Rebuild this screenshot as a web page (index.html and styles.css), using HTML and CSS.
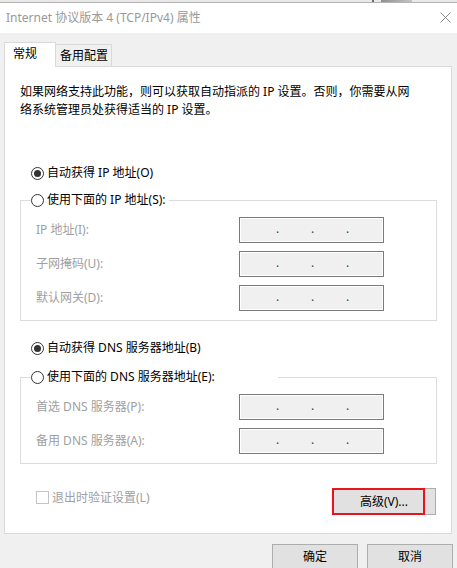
FILE: index.html
```html
<!DOCTYPE html>
<html lang="zh-CN">
<head>
<meta charset="utf-8">
<title>Internet 协议版本 4 (TCP/IPv4) 属性</title>
<link rel="stylesheet" href="styles.css">
</head>
<body>
<div class="topstrip"><span class="ts-tick"></span><span class="ts-block"></span></div>
<div class="titlebar">
  <span class="title">Internet 协议版本 4 (TCP/IPv4) 属性</span>
  <svg class="close" width="11" height="11" viewBox="0 0 11 11"><path d="M0.5 0.5 L10.5 10.5 M10.5 0.5 L0.5 10.5" stroke="#8c8c8c" stroke-width="1" fill="none"/></svg>
</div>
<div class="dialog">
  <div class="tabs">
    <div class="tab active">常规</div>
    <div class="tab">备用配置</div>
  </div>
  <div class="panel">
    <p class="desc">如果网络支持此功能，则可以获取自动指派的 IP 设置。否则，你需要从网<br>络系统管理员处获得适当的 IP 设置。</p>

    <div class="radio-row r-ip"><span class="radio checked"></span>自动获得 IP 地址(O)</div>
    <fieldset class="group g-ip">
      <legend class="radio-row"><span class="radio"></span>使用下面的 IP 地址(S):</legend>
      <div class="fields">
        <span class="flabel">IP 地址(I):</span>
        <span class="ipbox"><span>.</span><span>.</span><span>.</span></span>
        <span class="flabel">子网掩码(U):</span>
        <span class="ipbox"><span>.</span><span>.</span><span>.</span></span>
        <span class="flabel">默认网关(D):</span>
        <span class="ipbox"><span>.</span><span>.</span><span>.</span></span>
      </div>
    </fieldset>

    <div class="radio-row r-dns"><span class="radio checked"></span>自动获得 DNS 服务器地址(B)</div>
    <fieldset class="group g-dns">
      <legend class="radio-row wide"><span class="radio"></span>使用下面的 DNS 服务器地址(E):</legend>
      <div class="fields">
        <span class="flabel">首选 DNS 服务器(P):</span>
        <span class="ipbox"><span>.</span><span>.</span><span>.</span></span>
        <span class="flabel">备用 DNS 服务器(A):</span>
        <span class="ipbox"><span>.</span><span>.</span><span>.</span></span>
      </div>
    </fieldset>

    <div class="bottom-row">
      <div class="check-row"><span class="checkbox"></span>退出时验证设置(L)</div>
      <button class="btn adv">高级(V)...<span class="highlight"></span></button>
    </div>
  </div>
  <div class="dialog-buttons">
    <button class="btn ok">确定</button>
    <button class="btn cancel">取消</button>
  </div>
</div>
</body>
</html>
```
FILE: styles.css
```css
* { box-sizing: border-box; }
html, body { margin: 0; padding: 0; }
body {
  width: 457px;
  height: 568px;
  overflow: hidden;
  background: #f0f0f0;
  font-family: "Noto Sans", "Noto Sans CJK SC", sans-serif;
  font-size: 12px;
  color: #000;
}

.topstrip {
  height: 3px;
  background: #e9e9e9;
  border-bottom: 1px solid #b4b4b4;
  display: flex;
}
.ts-tick {
  width: 2px;
  height: 2px;
  margin-left: 372px;
  background: #6e6e6e;
}
.ts-block {
  width: 31px;
  height: 2px;
  margin-left: 7px;
  background: linear-gradient(to right, #8f8f8f, #c4c4c4);
}

.titlebar {
  height: 30px;
  background: #fff;
  display: flex;
  align-items: center;
  justify-content: space-between;
  padding: 0 6px 0 6px;
}
.title {
  color: #999;
  line-height: 18px;
}
.close { display: block; margin-top: -1px; }

.dialog {
  padding: 9px 4px 0 4px;
}

.tabs {
  display: flex;
  align-items: flex-end;
  height: 24px;
  position: relative;
  z-index: 1;
}
.tab {
  height: 22px;
  width: 56px;
  border: 1px solid #d9d9d9;
  border-bottom: none;
  border-left: none;
  padding-left: 4px;
  line-height: 21px;
  background: #f0f0f0;
}
.tab.active {
  height: 25px;
  width: 52px;
  margin-bottom: -1px;
  border-left: 1px solid #d9d9d9;
  background: #fff;
  padding-left: 8px;
  line-height: 22px;
}

.panel {
  width: 448px;
  height: 468px;
  background: #fff;
  border: 1px solid #d9d9d9;
  padding-top: 16px;
  display: flex;
  flex-direction: column;
}

.desc {
  margin: 0 0 0 15px;
  line-height: 18px;
}

.radio-row {
  display: flex;
  align-items: center;
  gap: 3px;
  height: 18px;
  line-height: 18px;
  white-space: nowrap;
}
.r-ip { margin-top: 45px; padding-left: 26px; }
.r-dns { margin-top: 18px; padding-left: 26px; }

.radio {
  width: 13px;
  height: 13px;
  border: 1px solid #333;
  border-radius: 50%;
  background: #fff;
  display: flex;
  align-items: center;
  justify-content: center;
  flex: none;
}
.radio.checked::after {
  content: "";
  width: 7px;
  height: 7px;
  border-radius: 50%;
  background: #333;
}

.group {
  margin: 9px 14px 0 15px;
  border: 1px solid #dcdcdc;
  padding: 0;
  min-width: 0;
}
.g-dns { margin-top: 11px; }
.group legend {
  padding: 0 3px 0 0;
  margin-left: 10px;
}
.group legend.wide { width: 247px; }

.fields {
  display: grid;
  grid-template-columns: 203px 145px;
  grid-auto-rows: 26px;
  row-gap: 8px;
  align-items: center;
  padding: 8px 0 9px 15px;
}
.flabel {
  color: #a0a0a0;
  line-height: 18px;
  white-space: nowrap;
}
.ipbox {
  height: 26px;
  border: 1px solid #7a7a7a;
  box-shadow: inset 0 0 0 1px #fff;
  background: #f0f0f0;
  display: flex;
  padding-left: 33px;
  gap: 26px;
  line-height: 22px;
  color: #444;
}
.ipbox span {
  width: 9px;
  text-align: center;
}

.bottom-row {
  margin-top: 24px;
  display: flex;
  justify-content: space-between;
  align-items: flex-start;
  padding: 0 15px 0 31px;
}
.check-row {
  display: flex;
  align-items: center;
  gap: 3px;
  height: 18px;
  color: #a0a0a0;
}
.checkbox {
  width: 13px;
  height: 13px;
  border: 1px solid #c4c4c4;
  background: #fff;
}

.btn {
  font: inherit;
  color: #000;
  background: #e1e1e1;
  border: 1px solid #adadad;
  padding: 0;
  display: flex;
  align-items: center;
  justify-content: center;
  line-height: 18px;
}
.btn.adv {
  width: 104px;
  height: 27px;
  position: relative;
}
.highlight {
  position: absolute;
  left: -1px;
  top: -1px;
  width: 93px;
  height: 27px;
  border: 2px solid #e8141c;
}

.dialog-buttons {
  margin-top: 10px;
  display: flex;
  justify-content: flex-end;
  gap: 9px;
}
.dialog-buttons .btn {
  width: 86px;
  height: 26px;
}
```
